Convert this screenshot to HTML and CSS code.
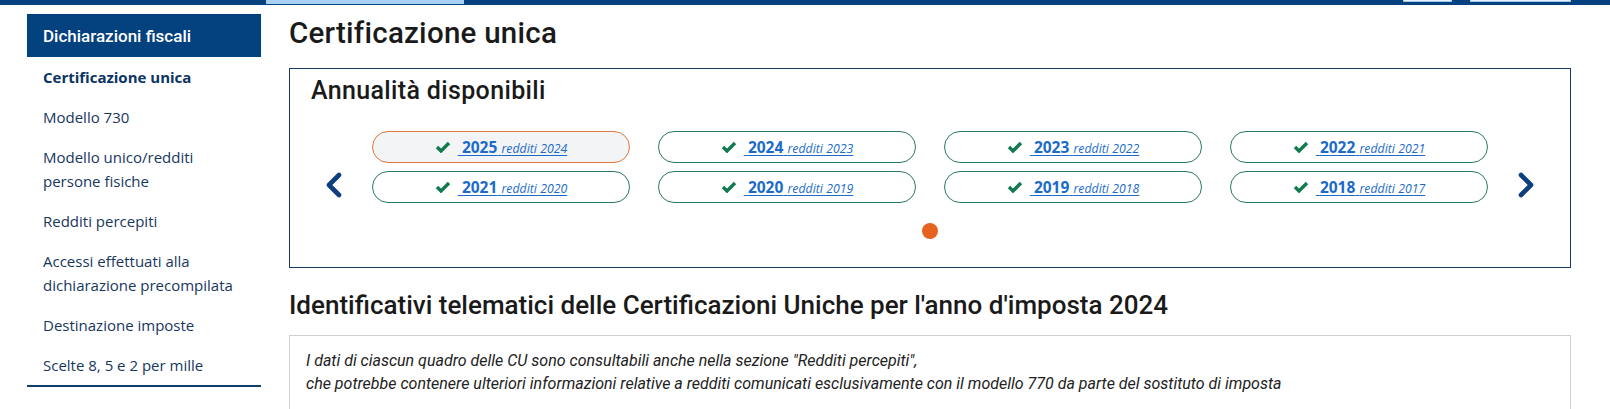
FILE: index.html
```html
<!DOCTYPE html>
<html lang="it">
<head>
<meta charset="utf-8">
<title>Certificazione unica</title>
<link rel="stylesheet" href="styles.css">
</head>
<body>
<div class="topbar">
  <span class="tab-active"></span>
  <span class="top-btn top-btn-sm"></span>
  <span class="top-btn top-btn-lg"></span>
</div>
<div class="layout">
  <nav class="sidebar">
    <div class="side-head">Dichiarazioni fiscali</div>
    <ul class="side-list">
      <li class="side-item current">Certificazione unica</li>
      <li class="side-item">Modello 730</li>
      <li class="side-item">Modello unico/redditi<br>persone fisiche</li>
      <li class="side-item">Redditi percepiti</li>
      <li class="side-item">Accessi effettuati alla<br>dichiarazione precompilata</li>
      <li class="side-item">Destinazione imposte</li>
      <li class="side-item">Scelte 8, 5 e 2 per mille</li>
    </ul>
  </nav>
  <main class="main">
    <h1 class="page-title">Certificazione unica</h1>
    <section class="years-box">
      <h2 class="years-title">Annualità disponibili</h2>
      <div class="carousel">
        <span class="arrow">
          <svg viewBox="0 0 19 26" width="19" height="26"><polyline points="15,3 5,13 15,23" fill="none" stroke="#0d3f7e" stroke-width="4.6" stroke-linecap="round" stroke-linejoin="round"/></svg>
        </span>
        <div class="pills">
          <div class="pill active"><svg class="check" viewBox="0 0 16 12" width="16" height="12"><polyline points="2,6 6,10 14,2" fill="none" stroke="#137a50" stroke-width="3.4"/></svg><a class="year-link" href="#">&nbsp;<b>2025</b> <i>redditi 2024</i></a></div>
          <div class="pill"><svg class="check" viewBox="0 0 16 12" width="16" height="12"><polyline points="2,6 6,10 14,2" fill="none" stroke="#137a50" stroke-width="3.4"/></svg><a class="year-link" href="#">&nbsp;<b>2024</b> <i>redditi 2023</i></a></div>
          <div class="pill"><svg class="check" viewBox="0 0 16 12" width="16" height="12"><polyline points="2,6 6,10 14,2" fill="none" stroke="#137a50" stroke-width="3.4"/></svg><a class="year-link" href="#">&nbsp;<b>2023</b> <i>redditi 2022</i></a></div>
          <div class="pill"><svg class="check" viewBox="0 0 16 12" width="16" height="12"><polyline points="2,6 6,10 14,2" fill="none" stroke="#137a50" stroke-width="3.4"/></svg><a class="year-link" href="#">&nbsp;<b>2022</b> <i>redditi 2021</i></a></div>
          <div class="pill"><svg class="check" viewBox="0 0 16 12" width="16" height="12"><polyline points="2,6 6,10 14,2" fill="none" stroke="#137a50" stroke-width="3.4"/></svg><a class="year-link" href="#">&nbsp;<b>2021</b> <i>redditi 2020</i></a></div>
          <div class="pill"><svg class="check" viewBox="0 0 16 12" width="16" height="12"><polyline points="2,6 6,10 14,2" fill="none" stroke="#137a50" stroke-width="3.4"/></svg><a class="year-link" href="#">&nbsp;<b>2020</b> <i>redditi 2019</i></a></div>
          <div class="pill"><svg class="check" viewBox="0 0 16 12" width="16" height="12"><polyline points="2,6 6,10 14,2" fill="none" stroke="#137a50" stroke-width="3.4"/></svg><a class="year-link" href="#">&nbsp;<b>2019</b> <i>redditi 2018</i></a></div>
          <div class="pill"><svg class="check" viewBox="0 0 16 12" width="16" height="12"><polyline points="2,6 6,10 14,2" fill="none" stroke="#137a50" stroke-width="3.4"/></svg><a class="year-link" href="#">&nbsp;<b>2018</b> <i>redditi 2017</i></a></div>
        </div>
        <span class="arrow">
          <svg viewBox="0 0 19 26" width="19" height="26"><polyline points="4,3 14,13 4,23" fill="none" stroke="#0d3f7e" stroke-width="4.6" stroke-linecap="round" stroke-linejoin="round"/></svg>
        </span>
      </div>
      <div class="dots"><span class="dot"></span></div>
    </section>
    <h2 class="section-title">Identificativi telematici delle Certificazioni Uniche per l'anno d'imposta 2024</h2>
    <div class="note-box">
      <p class="note">I dati di ciascun quadro delle CU sono consultabili anche nella sezione "Redditi percepiti",<br>che potrebbe contenere ulteriori informazioni relative a redditi comunicati esclusivamente con il modello 770 da parte del sostituto di imposta</p>
    </div>
  </main>
</div>
</body>
</html>
```

FILE: styles.css
```css
* {
  box-sizing: border-box;
}

html, body {
  margin: 0;
  padding: 0;
  background: #ffffff;
}

body {
  font-family: "Open Sans", "Noto Sans", sans-serif;
  color: #1a1a1a;
  overflow: hidden;
}

.topbar {
  display: flex;
  align-items: flex-start;
  height: 5px;
  background: #06417f;
  padding-left: 266px;
  padding-right: 39px;
}

.tab-active {
  display: block;
  width: 198px;
  height: 4px;
  background: #a9d1f3;
}

.top-btn {
  display: block;
  height: 2px;
  background: #eef6fd;
  border: 1px solid #9cc7ee;
  border-top: 0;
}

.top-btn-sm {
  width: 49px;
  margin-left: auto;
}

.top-btn-lg {
  width: 101px;
  margin-left: 18px;
}

.layout {
  display: flex;
  align-items: flex-start;
  gap: 28px;
  padding: 9px 39px 0 27px;
}

/* Sidebar */
.sidebar {
  width: 234px;
  flex: 0 0 234px;
}

.side-head {
  display: flex;
  align-items: center;
  height: 43px;
  padding-left: 16px;
  background: #04417f;
  color: #ffffff;
  font-family: Roboto, "Liberation Sans", sans-serif;
  font-weight: 500;
  font-size: 17px;
}

.side-list {
  list-style: none;
  margin: 0;
  padding: 0;
  border-bottom: 2px solid #123d69;
}

.side-item {
  padding: 8px 16px;
  font-size: 15px;
  line-height: 24px;
  color: #17375e;
}

.side-item.current {
  font-weight: 700;
  color: #0b3363;
}

/* Main */
.main {
  flex: 1 1 auto;
  min-width: 0;
}

.page-title {
  margin: 2px 0 17px;
  font-family: Roboto, "Liberation Sans", sans-serif;
  font-weight: 500;
  font-size: 29.5px;
  letter-spacing: 0.25px;
  line-height: 35px;
  color: #1a1a1a;
}

.years-box {
  height: 200px;
  border: 1px solid #1b3a5d;
  padding: 6px 0 0 21px;
}

.years-title {
  margin: 0 0 24px;
  font-family: Roboto, "Liberation Sans", sans-serif;
  font-weight: 500;
  font-size: 25px;
  letter-spacing: 0.35px;
  line-height: 32px;
  color: #1a1a1a;
}

.carousel {
  display: flex;
  justify-content: center;
  align-items: flex-start;
  gap: 29px;
  margin-left: -21px;
}

.arrow {
  display: block;
  width: 19px;
  height: 26px;
  margin-top: 41px;
}

.arrow svg {
  display: block;
}

.pills {
  display: grid;
  grid-template-columns: repeat(4, 258px);
  column-gap: 28px;
  row-gap: 8px;
}

.pill {
  display: flex;
  align-items: center;
  justify-content: center;
  height: 32px;
  border: 1px solid #2b7b5b;
  border-radius: 16px;
  background: #ffffff;
}

.pill.active {
  border-color: #e0763f;
  background: #f3f4f6;
}

.check {
  display: block;
  margin-right: 7px;
}

.year-link {
  color: #1b6bcb;
  text-decoration: underline;
  text-underline-offset: 2px;
  white-space: nowrap;
}

.year-link b {
  font-weight: 700;
  font-size: 15.5px;
}

.year-link i {
  font-style: italic;
  font-size: 12.3px;
}

.dots {
  display: flex;
  justify-content: center;
  margin: 20px 0 0 -21px;
}

.dot {
  display: block;
  width: 16px;
  height: 16px;
  border-radius: 50%;
  background: #e5621f;
}

.section-title {
  margin: 21px 0 14px;
  font-family: Roboto, "Liberation Sans", sans-serif;
  font-weight: 500;
  font-size: 26px;
  line-height: 32px;
  color: #1a1a1a;
}

.note-box {
  border: 1px solid #d0d0d0;
  padding: 13px 16px 20px;
}

.note {
  margin: 0;
  font-family: Roboto, "Liberation Sans", sans-serif;
  font-style: italic;
  font-size: 16px;
  line-height: 23px;
  color: #222222;
}
```
